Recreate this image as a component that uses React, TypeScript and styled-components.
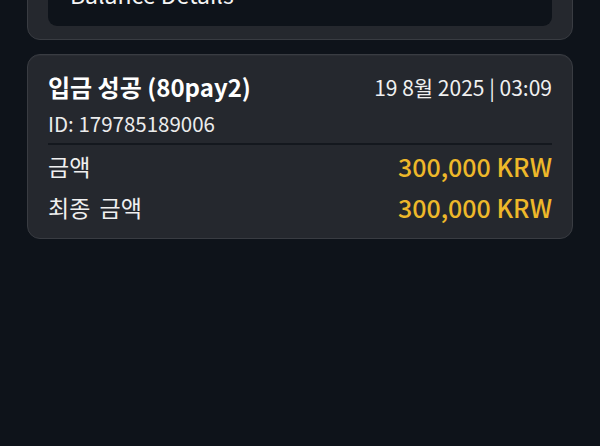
import React from "react";
import styled, { createGlobalStyle } from "styled-components";

const Global = createGlobalStyle`
  html, body {
    margin: 0;
    padding: 0;
    background: #0e131a;
    overflow: hidden;
  }
  body {
    font-family: "Noto Sans CJK KR", "Noto Sans", sans-serif;
    color: #f2f2f2;
  }
`;

const Page = styled.div`
  display: flex;
  flex-direction: column;
  gap: 14px;
  padding: 0 27px;
  margin-top: -72px;
  min-height: 518px;
  background: #0e131a;
`;

const Card = styled.div`
  background: #25282e;
  border: 1px solid #393c42;
  border-radius: 13px;
  box-shadow: inset 0 1px 0 rgba(255, 255, 255, 0.03);
`;

const SummaryCard = styled(Card)`
  padding: 20px 20px 13px;
`;

const InnerBox = styled.div`
  background: #0e131a;
  border-radius: 9px;
  padding: 30px 22px 17px;
  font-size: 23px;
  line-height: 30px;
  color: #f4f4f4;
`;

const TxCard = styled(Card)`
  padding: 14px 20px 11px;
  display: flex;
  flex-direction: column;
`;

const Header = styled.div`
  display: flex;
  justify-content: space-between;
  align-items: flex-start;
`;

const Title = styled.div`
  font-size: 24px;
  font-weight: 700;
  line-height: 36px;
  color: #ffffff;
`;

const DateText = styled.div`
  font-size: 21px;
  line-height: 36px;
  color: #f0f0f0;
`;

const IdLine = styled.div`
  font-size: 20.5px;
  line-height: 36px;
  color: #ececec;
  padding-bottom: 2px;
`;

const Divider = styled.div`
  height: 2px;
  background: #14181e;
`;

const Row = styled.div`
  display: flex;
  justify-content: space-between;
  align-items: center;
  height: 41px;
`;

const Label = styled.span`
  font-size: 23px;
  word-spacing: 4px;
  color: #f0f0f0;
`;

const Amount = styled.span`
  font-size: 25px;
  font-weight: 500;
  color: #eeb82a;
`;

export default function App() {
  return (
    <>
      <Global />
      <Page>
        <SummaryCard>
          <InnerBox>Balance Details</InnerBox>
        </SummaryCard>
        <TxCard>
          <Header>
            <Title>입금 성공 (80pay2)</Title>
            <DateText>19 8월 2025 | 03:09</DateText>
          </Header>
          <IdLine>ID: 179785189006</IdLine>
          <Divider />
          <Row>
            <Label>금액</Label>
            <Amount>300,000 KRW</Amount>
          </Row>
          <Row>
            <Label>최종 금액</Label>
            <Amount>300,000 KRW</Amount>
          </Row>
        </TxCard>
      </Page>
    </>
  );
}
